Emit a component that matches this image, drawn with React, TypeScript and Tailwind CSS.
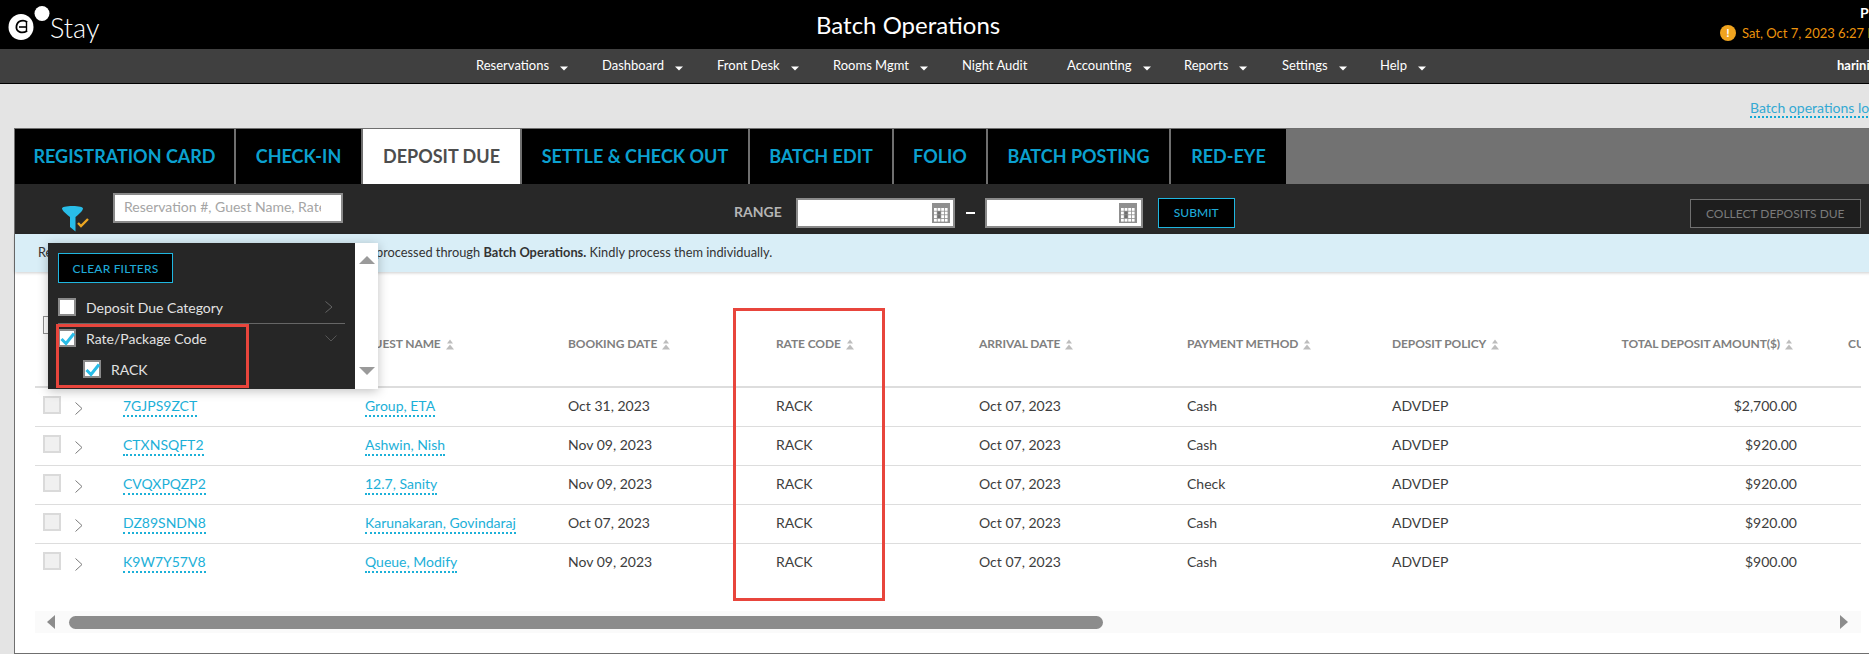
import React from "react";

const navItems = [
  { label: "Reservations", w: "w-[126px]", caret: true },
  { label: "Dashboard", w: "w-[115px]", caret: true },
  { label: "Front Desk", w: "w-[116px]", caret: true },
  { label: "Rooms Mgmt", w: "w-[129px]", caret: true },
  { label: "Night Audit", w: "w-[105px]", caret: false },
  { label: "Accounting", w: "w-[117px]", caret: true },
  { label: "Reports", w: "w-[98px]", caret: true },
  { label: "Settings", w: "w-[98px]", caret: true },
  { label: "Help", w: "w-[80px]", caret: true },
];

const tabs = [
  { label: "REGISTRATION CARD", w: "w-[221px]" },
  { label: "CHECK-IN", w: "w-[127px]" },
  { label: "DEPOSIT DUE", w: "w-[159px]", active: true },
  { label: "SETTLE & CHECK OUT", w: "w-[228px]" },
  { label: "BATCH EDIT", w: "w-[144px]" },
  { label: "FOLIO", w: "w-[94px]" },
  { label: "BATCH POSTING", w: "w-[183px]" },
  { label: "RED-EYE", w: "w-[115px]" },
];

const rows = [
  ["7GJPS9ZCT", "Group, ETA", "Oct 31, 2023", "RACK", "Oct 07, 2023", "Cash", "ADVDEP", "$2,700.00"],
  ["CTXNSQFT2", "Ashwin, Nish", "Nov 09, 2023", "RACK", "Oct 07, 2023", "Cash", "ADVDEP", "$920.00"],
  ["CVQXPQZP2", "12.7, Sanity", "Nov 09, 2023", "RACK", "Oct 07, 2023", "Check", "ADVDEP", "$920.00"],
  ["DZ89SNDN8", "Karunakaran, Govindaraj", "Oct 07, 2023", "RACK", "Oct 07, 2023", "Cash", "ADVDEP", "$920.00"],
  ["K9W7Y57V8", "Queue, Modify", "Nov 09, 2023", "RACK", "Oct 07, 2023", "Cash", "ADVDEP", "$900.00"],
];

const gridCols = "grid grid-cols-[80px_242px_203px_208px_203px_208px_205px_205px_200px_1fr]";

function Caret() {
  return (
    <svg width="8" height="5" viewBox="0 0 8 5" className="ml-[11px] mt-[4px] shrink-0">
      <path d="M0 0.5H8L4 4.5Z" fill="#fff" />
    </svg>
  );
}

function SortIcon() {
  return (
    <svg width="8" height="11" viewBox="0 0 8 11" className="ml-[5px] shrink-0">
      <path d="M4 0.5L7 4.5H1Z" fill="#bdbdbd" />
      <path d="M4 5.5L8 10.5H0Z" fill="#bdbdbd" />
    </svg>
  );
}

function CalendarIcon() {
  const cells = [];
  for (let r = 0; r < 4; r++) {
    for (let c = 0; c < 4; c++) {
      const dark = (r === 1 && c === 1) || (r === 2 && c === 1);
      cells.push(<rect key={`${r}-${c}`} x={2 + c * 3.6} y={5 + r * 3.6} width="2.8" height="2.8" fill={dark ? "#6e6e6e" : "#fff"} />);
    }
  }
  return (
    <svg width="18" height="20" viewBox="0 0 18 20" className="shrink-0">
      <rect width="18" height="20" fill="#8f8f8f" />
      {cells}
    </svg>
  );
}

function Logo() {
  return (
    <svg width="50" height="49" viewBox="0 0 50 49" className="shrink-0">
      <ellipse cx="21" cy="27" rx="12.5" ry="13" fill="#fff" />
      <circle cx="42" cy="13.5" r="7.5" fill="#fff" />
      <path d="M27 22C24 19.5 17.5 20 16.5 26C15.5 32 22 34 27 31" fill="none" stroke="#000" strokeWidth="1.8" />
      <path d="M19 27H26" stroke="#000" strokeWidth="1.6" />
      <path d="M26.5 21V32" stroke="#000" strokeWidth="1.4" />
    </svg>
  );
}

function FilterIcon() {
  return (
    <svg width="27" height="26" viewBox="0 0 27 26" className="shrink-0">
      <path d="M0 2.5C0 1 4 0 10.5 0C17 0 21 1 21 2.5C21 4 19 6.5 13.5 11V25.5L8 21V11C2.5 6.5 0 4 0 2.5Z" fill="#29bde8" />
      <path d="M16 17L19 20L26 13" fill="none" stroke="#eda723" strokeWidth="2.4" />
    </svg>
  );
}

function TriangleV({ up }: { up: boolean }) {
  return (
    <svg width="16" height="8" viewBox="0 0 16 8">
      <path d={up ? "M8 0L16 8H0Z" : "M8 8L16 0H0Z"} fill="#9a9a9a" />
    </svg>
  );
}

function Check({ checked }: { checked: boolean }) {
  return (
    <span className="relative block h-[18px] w-[18px] shrink-0 border-2 border-[#8a8a8a] bg-white">
      {checked && (
        <svg width="18" height="16" viewBox="0 0 18 16" className="absolute left-[-1px] top-0">
          <path d="M2.5 8L7 12.5L15 2.5" fill="none" stroke="#29bde8" strokeWidth="3" />
        </svg>
      )}
    </span>
  );
}

function Chevron() {
  return (
    <svg width="8" height="13" viewBox="0 0 8 13" className="mt-[6px] ml-[14px] shrink-0">
      <path d="M0.5 0.5L7 6.5L0.5 12.5" fill="none" stroke="#7a7a7a" strokeWidth="1" />
    </svg>
  );
}

function Head({ children, right }: { children: React.ReactNode; right?: boolean }) {
  return (
    <div className={`mt-[19px] flex h-[18px] items-center whitespace-nowrap text-[12px] font-bold tracking-[-0.1px] text-[#808080] ${right ? "justify-end pr-[4px]" : ""}`}>
      {children}
      <SortIcon />
    </div>
  );
}

function LinkText({ children }: { children: React.ReactNode }) {
  return <span className="border-b-2 border-dotted border-[#1cb0d8] pb-[1px] text-[#1cb0d8]">{children}</span>;
}

export default function App() {
  return (
    <div className="relative h-[655px] w-[1869px] overflow-hidden bg-white font-['Lato',sans-serif]">
      <header className="relative flex h-[49px] items-start justify-between bg-black">
        <div className="flex h-full items-start">
          <Logo />
          <span className="mt-[9px] text-[27px] font-light leading-[38px] text-white">Stay</span>
        </div>
        <h1 className="absolute left-[816px] top-[7px] whitespace-nowrap text-[24px] font-normal leading-[36px] text-white">Batch Operations</h1>
        <div className="ml-auto w-[149px] whitespace-nowrap">
          <div className="mt-[5px] pl-[140px] text-[14px] font-bold leading-[16px] text-white">PMS</div>
          <div className="mt-[2px] flex items-center">
            <span className="flex h-[16px] w-[16px] shrink-0 items-center justify-center rounded-full bg-[#f0a41f] text-[12px] font-bold leading-none text-white">!</span>
            <span className="ml-[6px] text-[13px] leading-[20px] text-[#ec930c]">Sat, Oct 7, 2023 6:27 PM</span>
          </div>
        </div>
      </header>

      <nav className="flex h-[35px] items-center border-b border-black bg-[#404040] pl-[476px] text-[13px] text-white">
        {navItems.map((n) => (
          <div key={n.label} className={`flex shrink-0 items-center whitespace-nowrap ${n.w}`}>
            <span>{n.label}</span>
            {n.caret && <Caret />}
          </div>
        ))}
        <span className="ml-[377px] shrink-0 whitespace-nowrap text-[13px] font-bold">harini</span>
      </nav>

      <div className="h-[44px] whitespace-nowrap bg-[#e4e4e4] pl-[1750px] pt-[11px]">
        <span className="border-b-2 border-dotted border-[#14a9d6] text-[14px] leading-[20px] text-[#34a9d3]">Batch operations log</span>
      </div>

      <div className="flex bg-[#e4e4e4] pl-[14px]">
        <main className="relative h-[526px] w-[1860px] shrink-0 border border-[#6f6f6f] bg-white">
          <div className="flex h-[55px] bg-[#727272]">
            {tabs.map((t) => (
              <div
                key={t.label}
                className={`flex items-center justify-center whitespace-nowrap text-[18px] font-bold tracking-normal ${t.w} ${
                  t.active ? "bg-white text-[#4d4d4d]" : "bg-black text-[#0ba0cf]"
                } border-r-2 border-[#6f6f6f] last:border-r-0`}
              >
                {t.label}
              </div>
            ))}
          </div>

          <div className="flex h-[50px] items-start bg-[#282828]">
            <div className="ml-[47px] mt-[22px]">
              <FilterIcon />
            </div>
            <div className="ml-[24px] mt-[9px] flex h-[30px] w-[230px] items-center overflow-hidden border-2 border-[#8a8a8a] bg-white pb-[3px] pl-[9px] pr-[20px]">
              <span className="overflow-hidden whitespace-nowrap text-[14px] text-[#a5a5a5]">Reservation #, Guest Name, Rate Code</span>
            </div>
            <span className="ml-[391px] mt-[19px] text-[14px] font-bold leading-[18px] text-[#b5b5b5]">RANGE</span>
            <div className="ml-[14px] mt-[14px] flex h-[30px] w-[159px] items-center justify-end border-2 border-[#8a8a8a] bg-white pr-[3px]">
              <CalendarIcon />
            </div>
            <span className="ml-[11px] mt-[28px] h-[2px] w-[9px] bg-white" />
            <div className="ml-[10px] mt-[14px] flex h-[30px] w-[158px] items-center justify-end border-2 border-[#8a8a8a] bg-white pr-[4px]">
              <CalendarIcon />
            </div>
            <button className="ml-[15px] mt-[14px] flex h-[30px] w-[77px] items-center justify-center border border-[#1fb6e0] bg-black text-[12px] font-medium text-[#1fa9d6]">SUBMIT</button>
            <button className="ml-[455px] mt-[15px] flex h-[29px] w-[171px] items-center justify-center border border-[#707070] bg-[#1e1e1e] text-[12px] text-[#7a7a7a]">COLLECT DEPOSITS DUE</button>
          </div>

          <div className="flex h-[38px] items-center whitespace-nowrap bg-[#d9eef7] pb-[1px] pl-[23px] text-[12.8px] text-[#333] shadow-[0_1px_3px_rgba(0,0,0,0.2)]">
            <span className="w-[338px] overflow-hidden">Reservations with pending balances cannot be</span>
            <span>processed through&nbsp;</span>
            <b>Batch Operations.</b>
            <span>&nbsp;Kindly process them individually.</span>
          </div>

          <div className="ml-[20px] w-[1826px] overflow-hidden">
            <div className={`${gridCols} h-[116px] border-b-[2px] border-[#dddddd] pl-[8px] pt-[44px]`}>
              <div>
                <span className="block h-[18px] w-[18px] border border-[#8f8f8f] bg-white" />
              </div>
              <Head>RESERVATION #</Head>
              <Head>GUEST NAME</Head>
              <Head>BOOKING DATE</Head>
              <Head>RATE CODE</Head>
              <Head>ARRIVAL DATE</Head>
              <Head>PAYMENT METHOD</Head>
              <Head>DEPOSIT POLICY</Head>
              <Head right>TOTAL DEPOSIT AMOUNT($)</Head>
              <div className="mt-[19px] h-[18px] whitespace-nowrap pl-[51px] text-[12px] font-bold leading-[18px] text-[#808080]">CURRENCY</div>
            </div>

            {rows.map((r, i) => (
              <div key={r[0]} className={`${gridCols} h-[39px] items-center pb-[4px] pl-[8px] text-[14px] text-[#3d3d3d] ${i < 4 ? "border-b border-[#dddddd]" : ""}`}>
                <div className="flex items-start">
                  <span className="block h-[18px] w-[18px] border-2 border-[#dadada] bg-[#f0f0f0]" />
                  <Chevron />
                </div>
                <div><LinkText>{r[0]}</LinkText></div>
                <div className="whitespace-nowrap"><LinkText>{r[1]}</LinkText></div>
                <div>{r[2]}</div>
                <div>{r[3]}</div>
                <div>{r[4]}</div>
                <div>{r[5]}</div>
                <div>{r[6]}</div>
                <div className="text-right">{r[7]}</div>
                <div />
              </div>
            ))}

            <div className="mt-[28px] flex h-[22px] items-center bg-[#fafafa]">
              <svg width="8" height="14" viewBox="0 0 8 14" className="ml-[12px] shrink-0">
                <path d="M8 0V14L0 7Z" fill="#8c8c8c" />
              </svg>
              <div className="ml-[14px] h-[13px] w-[1034px] rounded-l-full rounded-r-full bg-[#8c8c8c]" />
              <svg width="8" height="14" viewBox="0 0 8 14" className="ml-[737px] shrink-0">
                <path d="M0 0V14L8 7Z" fill="#8c8c8c" />
              </svg>
            </div>
          </div>

          {/* filter popover */}
          <div className="absolute left-[33px] top-[114px] flex h-[146px] w-[330px] bg-[#262626] shadow-[0_2px_10px_rgba(0,0,0,0.25)]">
            <div className="relative w-[307px] pl-[10px] pt-[10px]">
              <button className="flex h-[30px] w-[115px] items-center justify-center border border-[#1fb6e0] bg-black pt-[2px] text-[12px] font-medium tracking-[0.2px] text-[#1fa9d6]">CLEAR FILTERS</button>
              <div className="mt-[15px] flex h-[18px] w-[287px] items-center">
                <Check checked={false} />
                <span className="ml-[10px] text-[14px] text-[#e2e2e2]">Deposit Due Category</span>
                <svg width="8" height="12" viewBox="0 0 8 12" className="ml-auto mr-[12px]">
                  <path d="M0.5 0.5L7 6L0.5 11.5" fill="none" stroke="#666" strokeWidth="1" />
                </svg>
              </div>
              <div className="mt-[7px] h-px w-[287px] bg-[#666]" />
              <div className="mt-[5px] flex h-[18px] w-[287px] items-center">
                <Check checked />
                <span className="ml-[10px] text-[14px] text-[#e2e2e2]">Rate/Package Code</span>
                <svg width="12" height="7" viewBox="0 0 12 7" className="ml-auto mr-[8px]">
                  <path d="M0.5 0.5L6 6L11.5 0.5" fill="none" stroke="#555" strokeWidth="1" />
                </svg>
              </div>
              <div className="mt-[13px] flex h-[18px] items-center pl-[25px]">
                <Check checked />
                <span className="ml-[10px] text-[14px] text-[#e2e2e2]">RACK</span>
              </div>
              <div className="absolute left-[8px] top-[81px] h-[64px] w-[193px] border-[3px] border-[#e8453c]" />
            </div>
            <div className="flex w-[23px] flex-col items-center justify-between bg-white pb-[14px] pt-[13px]">
              <TriangleV up />
              <TriangleV up={false} />
            </div>
          </div>

          {/* annotation */}
          <div className="absolute left-[718px] top-[179px] h-[293px] w-[152px] border-[3px] border-[#e8453c]" />
        </main>
      </div>
    </div>
  );
}
